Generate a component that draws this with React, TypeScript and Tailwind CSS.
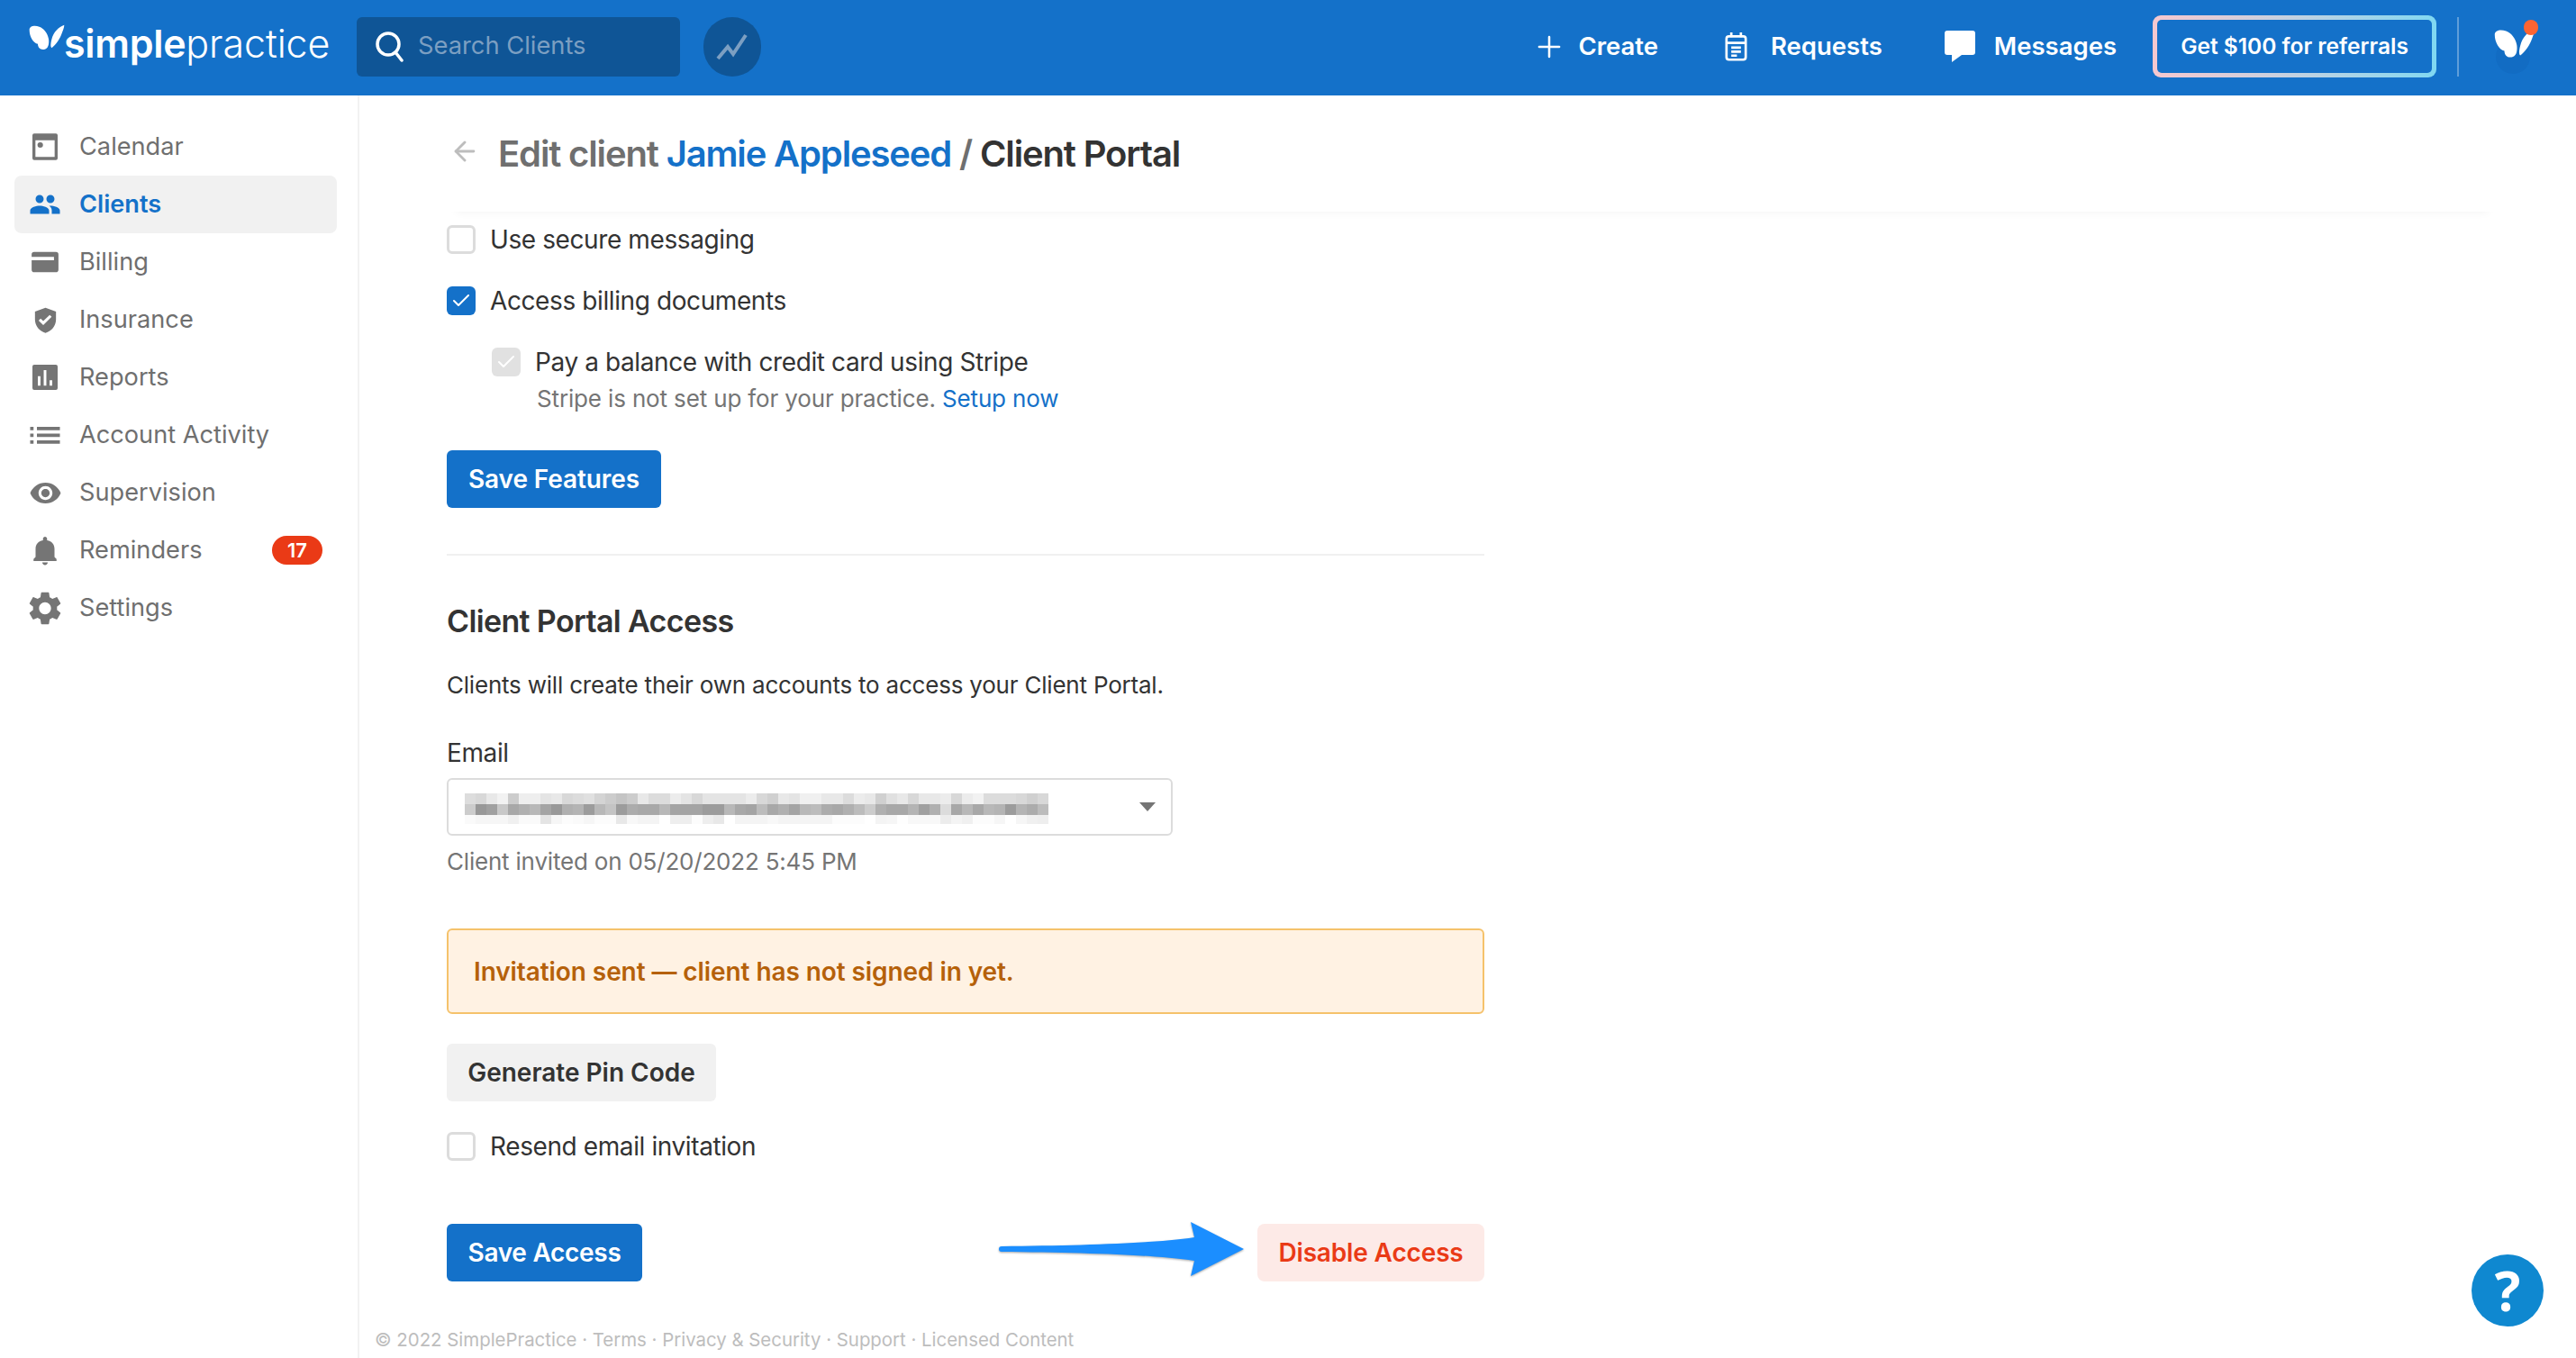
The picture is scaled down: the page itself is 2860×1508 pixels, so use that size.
import React from "react";
import { Plus, ArrowLeft, Check } from "lucide-react";

const font = { fontFamily: "Inter, 'Noto Sans', sans-serif" };

// sidebar glyphs
const NavIcon = ({ name, className }: { name: string; className?: string }) => {
  switch (name) {
    case "calendar":
      return (
        <svg viewBox="0 0 24 24" className={className} fill="currentColor">
          <path fillRule="evenodd" d="M3 1h18A1.500 1.500 0 0 1 22.500 2.500v19A1.500 1.500 0 0 1 21 23H3a1.500 1.500 0 0 1-1.500-1.500v-19A1.500 1.500 0 0 1 3 1zM4 6.500V20.500h16V6.500z" />
          <circle cx="8" cy="10.500" r="2.300" />
        </svg>
      );
    case "clients":
      return (
        <svg viewBox="0 0 24 24" className={className} fill="currentColor">
          <path d="M16 11c1.660 0 2.990-1.340 2.990-3S17.660 5 16 5c-1.660 0-3 1.340-3 3s1.340 3 3 3zm-8 0c1.660 0 2.990-1.340 2.990-3S9.660 5 8 5C6.340 5 5 6.340 5 8s1.340 3 3 3zm0 2c-2.330 0-7 1.170-7 3.500V19h14v-2.500c0-2.330-4.670-3.500-7-3.500zm8 0c-.29 0-.62.02-.97.05 1.160.84 1.970 1.970 1.970 3.450V19h6v-2.500c0-2.330-4.670-3.500-7-3.500z" />
        </svg>
      );
    case "billing":
      return (
        <svg viewBox="0 0 24 24" className={className} fill="currentColor">
          <path fillRule="evenodd" d="M3.500 4h17a2 2 0 0 1 2 2v12a2 2 0 0 1-2 2h-17a2 2 0 0 1-2-2V6a2 2 0 0 1 2-2zm-2 4v2.500h17.500V8z" />
        </svg>
      );
    case "insurance":
      return (
        <svg viewBox="0 0 24 24" className={className} fill="currentColor">
          <path fillRule="evenodd" d="M12 2.500l8 3v6c0 4.800-3.400 9-8 10.200-4.600-1.200-8-5.400-8-10.200v-6zm-1.700 13.200l6.400-6.200-1.500-1.500-4.900 4.700-2-1.900-1.500 1.500z" />
        </svg>
      );
    case "reports":
      return (
        <svg viewBox="0 0 24 24" className={className} fill="currentColor">
          <path fillRule="evenodd" d="M3 1.500h18A1.500 1.500 0 0 1 22.500 3v18a1.500 1.500 0 0 1-1.500 1.500H3A1.500 1.500 0 0 1 1.500 21V3A1.500 1.500 0 0 1 3 1.500zM6 11v8h2.200v-8zm4.900-5v13h2.200V6zm4.900 8.500V19H18v-4.500z" />
        </svg>
      );
    case "activity":
      return (
        <svg viewBox="0 0 24 24" className={className} fill="currentColor">
          <path d="M1 6h2.500v2.500H1zM1 11h2.500v2.500H1zM1 16h2.500v2.500H1zM6 6h17v2.500H6zM6 11h17v2.500H6zM6 16h17v2.500H6z" />
        </svg>
      );
    case "supervision":
      return (
        <svg viewBox="0 0 24 24" className={className} fill="currentColor">
          <path d="M12 4.500C7 4.500 2.730 7.610 1 12c1.730 4.390 6 7.500 11 7.500s9.270-3.110 11-7.500c-1.730-4.390-6-7.500-11-7.500zM12 17c-2.760 0-5-2.240-5-5s2.240-5 5-5 5 2.240 5 5-2.240 5-5 5zm0-8c-1.660 0-3 1.340-3 3s1.340 3 3 3 3-1.340 3-3-1.340-3-3-3z" />
        </svg>
      );
    case "reminders":
      return (
        <svg viewBox="0 0 24 24" className={className} fill="currentColor">
          <path d="M12 23c1.100 0 2-.9 2-2h-4c0 1.100.9 2 2 2zm7-6v-6c0-3.070-1.630-5.640-5.500-6.320V3.500c0-.83-.67-1.500-1.500-1.500s-1.500.67-1.500 1.500v1.180C6.640 5.360 5 7.920 5 11v6l-1.500 1.500V20h17v-1.500z" />
        </svg>
      );
    default:
      return (
        <svg viewBox="2.500 2 19 20" className={className} fill="currentColor">
          <path d="M19.140 12.940c.04-.3.06-.61.06-.94 0-.32-.02-.64-.07-.94l2.030-1.580c.18-.14.23-.41.12-.61l-1.920-3.320c-.12-.22-.37-.29-.59-.22l-2.390.96c-.5-.38-1.030-.7-1.620-.94l-.36-2.540c-.04-.24-.24-.41-.48-.41h-3.840c-.24 0-.43.17-.47.41l-.36 2.540c-.59.24-1.130.57-1.620.94l-2.390-.96c-.22-.08-.47 0-.59.22L2.740 8.870c-.12.21-.08.47.12.61l2.030 1.580c-.05.3-.09.63-.09.94s.02.64.07.94l-2.030 1.580c-.18.14-.23.41-.12.61l1.920 3.320c.12.22.37.29.59.22l2.390-.96c.5.38 1.030.7 1.620.94l.36 2.540c.05.24.24.41.48.41h3.840c.24 0 .44-.17.47-.41l.36-2.540c.59-.24 1.130-.56 1.620-.94l2.390.96c.22.08.47 0 .59-.22l1.920-3.320c.12-.22.07-.47-.12-.61l-2.010-1.580zM12 15.600c-1.980 0-3.600-1.620-3.600-3.600s1.620-3.600 3.600-3.600 3.600 1.620 3.600 3.600-1.620 3.600-3.600 3.600z" />
        </svg>
      );
  }
};

const navItems = [
  { id: "calendar", label: "Calendar", size: "w-[32px] h-[32px]" },
  { id: "clients", label: "Clients", active: true, size: "w-[36px] h-[36px]" },
  { id: "billing", label: "Billing", size: "w-[34px] h-[36px]" },
  { id: "insurance", label: "Insurance", size: "w-[35px] h-[35px]" },
  { id: "reports", label: "Reports", size: "w-[32px] h-[32px]" },
  { id: "activity", label: "Account Activity", size: "w-[36px] h-[36px]" },
  { id: "supervision", label: "Supervision", size: "w-[37px] h-[37px]" },
  { id: "reminders", label: "Reminders", badge: "17", size: "w-[36px] h-[36px]" },
  { id: "settings", label: "Settings", size: "w-[36px] h-[37px]" },
];

// butterfly mark, used in the logo and the top right corner
const Butterfly = ({ className }: { className?: string }) => (
  <svg viewBox="0 0 120 86" className={className} fill="#fff">
    <path d="M2 18C2 5 20 2 35 8c15 6 27 20 31 40 2 14 0 30-11 34-13 5-25-2-25-17C15 62 2 40 2 18z" />
    <path d="M118 2c-18 6-36 23-42 48-4 15-4 25 0 28 9-6 24-23 32-43 5-13 10-25 10-33z" />
  </svg>
);

const Checkbox = ({ state }: { state: "off" | "on" | "disabled" }) => {
  if (state === "off") {
    return <span className="w-8 h-8 shrink-0 rounded-[6px] border-[3px] border-[#dcdcdc] bg-white" />;
  }
  return (
    <span className={`w-8 h-8 shrink-0 rounded-[6px] flex items-center justify-center ${state === "on" ? "bg-[#1471c9]" : "bg-[#e1e1e1]"}`}>
      <Check className="w-6 h-6 text-white" strokeWidth={2} />
    </span>
  );
};

// pixelated email address, three bands of grey cells
const blurRows = [
  "ddd8e8f2cceeeee4e8d8dce0d4ccc4cce8dcdcece4d8e4e4e4e4ecd8d0e8e4f0f0e8e8dcece8d0e0e8d8e8e8ecd8ecf2dcdcdcd8d0d8",
  "cc98a0c8a8b0b8a498b0b49cb8c49caca8a8b8a4a4a49c9cb8a8a4bca8b0a4b8bcaca8b0bcccb0a8a8b4a0b0dca8b8a8b8b49cb4acbc",
  "faf6f6f6f0fafae4f6fcfaf6fcfce8f8f4f4ffeeeefceee8fff4f4f4f8f4f4f4f4f4fcfcfcfff4f6fef8f8f8ecf4f0fcfcf6fff6f0ee",
].map((row) => row.match(/../g) as string[]);
const blurHeights = ["h-[12px]", "h-[12px]", "h-[10px]"];

export default function App() {
  return (
    <div className="min-h-screen flex flex-col bg-white text-[#333] overflow-hidden relative" style={font}>
      {/* Top bar */}
      <header className="h-[106px] shrink-0 bg-[#1471c9] flex items-center pl-[32px] pr-[41px] pb-[2px] text-white">
        <div className="flex items-end w-[364px] h-[66px] pb-[11px] relative">
          <Butterfly className="absolute left-0 top-[8px] w-[40px] h-[29px]" />
          <span className="pl-[39px] text-[43px] leading-[52px] tracking-[-0.3px] font-semibold">simple</span>
          <span className="text-[43px] leading-[52px] tracking-[-0.1px] font-light">practice</span>
        </div>
        <div className="w-[359px] h-[66px] bg-[#0f5596] rounded-[6px] flex items-center pl-[20px] gap-[16px]">
          <svg viewBox="0 0 32 36" className="w-[32px] h-[36px]" fill="none" stroke="#fff" strokeWidth="3.5">
            <circle cx="15" cy="15" r="12" />
            <path d="M23 24l7 9" strokeLinecap="round" />
          </svg>
          <span className="text-[27.3px] text-[#7c9fc2] mb-[2px]">Search Clients</span>
        </div>
        <div className="ml-[26px] w-[64px] h-[66px] rounded-full bg-[#0f5596] flex items-center justify-center">
          <svg viewBox="0 0 36 32" className="w-[38px] h-[32px]" fill="none" stroke="#7c9fc2" strokeWidth="4">
            <path d="M2 29l11-13 6 8L33 3" />
          </svg>
        </div>
        <div className="ml-auto flex items-center mb-[1px]">
          <Plus className="w-[38px] h-[38px]" strokeWidth={1.6} />
          <span className="ml-[13px] text-[27.5px] font-semibold">Create</span>
          <svg viewBox="0 0 28 36" className="ml-[73px] w-[27px] h-[32px]" fill="none" stroke="#fff" strokeWidth="3">
            <rect x="2" y="5" width="24" height="29" rx="3" />
            <path d="M2 13h24M8 0v6M20 0v6M8 19h12M8 24h12M8 29h7" />
          </svg>
          <span className="ml-[25px] text-[27.5px] font-semibold">Requests</span>
          <svg viewBox="0 0 34 36" className="ml-[69px] w-[34px] h-[36px]" fill="#fff">
            <path d="M3 0h28a3 3 0 0 1 3 3v21a3 3 0 0 1-3 3H19l-11 8v-8H3a3 3 0 0 1-3-3V3a3 3 0 0 1 3-3z" />
          </svg>
          <span className="ml-[21px] text-[27.5px] font-semibold">Messages</span>
          <div className="ml-[40px] w-[315px] h-[69px] rounded-[9px] p-[5px] bg-gradient-to-r from-[#f6c8cf] to-[#7fd8f2]">
            <div className="w-full h-full rounded-[5px] bg-[#1471c9] flex items-center justify-center text-[24.5px] font-semibold">
              Get $100 for referrals
            </div>
          </div>
          <div className="ml-[23px] w-[2px] h-[66px] bg-[#5f9ed9]" />
          <div className="ml-[39px] w-[50px] h-[60px] relative">
            <span className="absolute left-[2px] top-[22px] w-[38px] h-[38px] rounded-full bg-[#126cc3]" />
            <Butterfly className="absolute left-0 top-[9px] w-[46px] h-[34px]" />
            <span className="absolute left-[33px] top-0 w-[16px] h-[17px] rounded-full bg-[#fc6432]" />
          </div>
        </div>
      </header>

      <div className="flex-1 flex">
        {/* Sidebar */}
        <aside className="w-[399px] shrink-0 border-r-2 border-[#f2f2f2] pt-[25px] px-[16px]">
          {navItems.map((item) => (
            <div
              key={item.id}
              className={`h-[64px] w-[358px] rounded-[8px] flex items-center ${item.active ? "bg-[#f1f1f1] text-[#1471c9] font-semibold" : "text-[#6f6f6f]"}`}
            >
              <span className="w-[72px] flex justify-center pr-[4px]">
                <NavIcon name={item.id} className={`${item.size} ${item.active ? "text-[#1471c9]" : "text-[#757575]"}`} />
              </span>
              <span className="text-[27.2px]">{item.label}</span>
              {item.badge && (
                <span className="ml-auto mr-[16px] w-[56px] h-[32px] rounded-full bg-[#ea3a16] text-white text-[22px] font-semibold flex items-center justify-center">
                  {item.badge}
                </span>
              )}
            </div>
          ))}
        </aside>

        {/* Main */}
        <main className="flex-1 flex flex-col">
          <div className="h-[129px] ml-[100px] mr-[90px] flex items-center shadow-[0_8px_10px_-8px_rgba(0,0,0,0.06)] text-[40px] font-semibold tracking-[-1.15px]">
            <ArrowLeft className="w-[34px] h-[34px] text-[#bdbdbd] mr-[20px] mb-[6px]" strokeWidth={2} />
            <span className="text-[#6f6f6f]">Edit client&nbsp;</span>
            <span className="text-[#1471c9]">Jamie Appleseed</span>
            <span className="text-[#6f6f6f]">&nbsp;/&nbsp;</span>
            <span className="text-[#333]">Client Portal</span>
          </div>

          <div className="flex-1 pl-[97px] w-[1249px] text-[28px] tracking-[-0.4px]">
            <label className="mt-[15px] flex items-center gap-[16px] h-[32px]">
              <Checkbox state="off" />
              <span>Use secure messaging</span>
            </label>
            <label className="mt-[36px] flex items-center gap-[16px] h-[32px]">
              <Checkbox state="on" />
              <span>Access billing documents</span>
            </label>
            <label className="mt-[36px] ml-[50px] flex items-center gap-[16px] h-[32px]">
              <Checkbox state="disabled" />
              <span>Pay a balance with credit card using Stripe</span>
            </label>
            <p className="ml-[100px] mt-[7px] h-[36px] leading-[36px] text-[26px] tracking-[-0.15px] text-[#757575]">
              Stripe is not set up for your practice. <span className="text-[#1471c9]">Setup now</span>
            </p>
            <button className="mt-[39px] h-[64px] w-[238px] rounded-[6px] bg-[#1471c9] text-white font-semibold tracking-[-0.1px]">Save Features</button>
            <div className="mt-[51px] h-[2px] bg-[#f0f0f0]" />
            <h2 className="mt-[51px] h-[44px] leading-[44px] text-[34px] font-semibold tracking-[-0.64px]">Client Portal Access</h2>
            <p className="mt-[31px] h-[36px] leading-[36px] text-[26px] tracking-[-0.21px]">Clients will create their own accounts to access your Client Portal.</p>
            <label className="block mt-[39px] h-[36px] leading-[36px] text-[28px]">Email</label>
            <div className="mt-[10px] w-[806px] h-[64px] rounded-[6px] border-[2px] border-[#dcdcdc] flex items-center pl-[18px] pr-[17px]">
              <div className="flex flex-col mt-[4px]">
                {blurRows.map((row, i) => (
                  <div key={i} className="flex">
                    {row.map((v, j) => (
                      <span key={j} className={`w-[12px] ${blurHeights[i]}`} style={{ backgroundColor: `#${v}${v}${v}` }} />
                    ))}
                  </div>
                ))}
              </div>
              <span className="ml-auto w-0 h-0 border-l-[9px] border-r-[9px] border-t-[10px] border-l-transparent border-r-transparent border-t-[#757575]" />
            </div>
            <p className="mt-[11px] h-[36px] leading-[36px] text-[26px] tracking-[-0.2px] text-[#757575]">Client invited on 05/20/2022 5:45 PM</p>
            <div className="mt-[56px] h-[95px] rounded-[6px] border-2 border-[#f5c26b] bg-[#fff2e3] flex items-center pl-[28px] text-[#b5610a] font-semibold tracking-[-0.08px]">
              Invitation sent — client has not signed in yet.
            </div>
            <button className="mt-[33px] h-[64px] w-[299px] block rounded-[6px] bg-[#f1f1f1] text-[#333] font-semibold tracking-[0px]">Generate Pin Code</button>
            <label className="mt-[34px] flex items-center gap-[16px] h-[32px]">
              <Checkbox state="off" />
              <span>Resend email invitation</span>
            </label>
            <div className="mt-[70px] flex justify-between relative">
              <button className="h-[64px] w-[217px] rounded-[6px] bg-[#1471c9] text-white font-semibold tracking-[-0.3px]">Save Access</button>
              {/* annotation arrow */}
              <svg viewBox="0 0 272 60" className="absolute left-[613px] top-[-2px] w-[272px] h-[60px] drop-shadow-[0_1px_1px_rgba(0,0,0,0.35)]" fill="#1b8eff">
                <path d="M3 27C90 26 170 24 217 17L213 0l59 30-59 30 4-17C170 36 90 34 3 33a3 3 0 0 1 0-6z" />
              </svg>
              <button className="h-[64px] w-[252px] rounded-[8px] bg-[#fdeae7] text-[#ea3a16] font-semibold tracking-[-0.15px]">Disable Access</button>
            </div>
          </div>

          <footer className="h-[62px] pl-[17px] flex items-center text-[20.4px] text-[#bdbdbd] pt-[22px]">
            © 2022 SimplePractice · Terms · Privacy & Security · Support · Licensed Content
          </footer>
        </main>
      </div>

      {/* Help button */}
      <div className="absolute left-[2744px] top-[1393px] w-[80px] h-[80px] rounded-full bg-[#0f88d0] text-white flex items-center justify-center text-[60px] font-bold leading-none" style={{ fontFamily: "'Open Sans', sans-serif" }}>
        ?
      </div>
    </div>
  );
}
